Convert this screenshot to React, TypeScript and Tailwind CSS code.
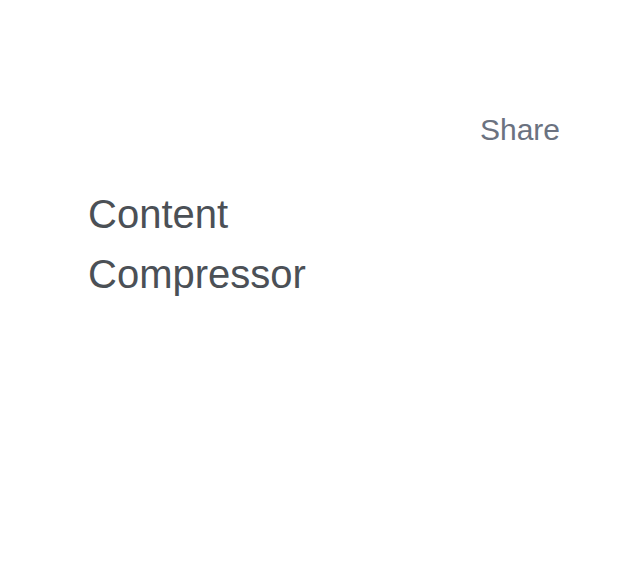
export default function App() {
  return (
    <div className="min-h-screen bg-white font-['Liberation_Sans',Arial,sans-serif]">
      <div className="px-[68px] pt-[112px]">
        <div className="flex justify-end">
          <button type="button" className="text-[30px] leading-[36px] text-[#6b7280]">
            Share
          </button>
        </div>
        <h1 className="mt-[36px] pl-[20px] text-[40px] leading-[60px] text-[#4b5056]">
          Content
          <br />
          Compressor
        </h1>
      </div>
    </div>
  );
}
